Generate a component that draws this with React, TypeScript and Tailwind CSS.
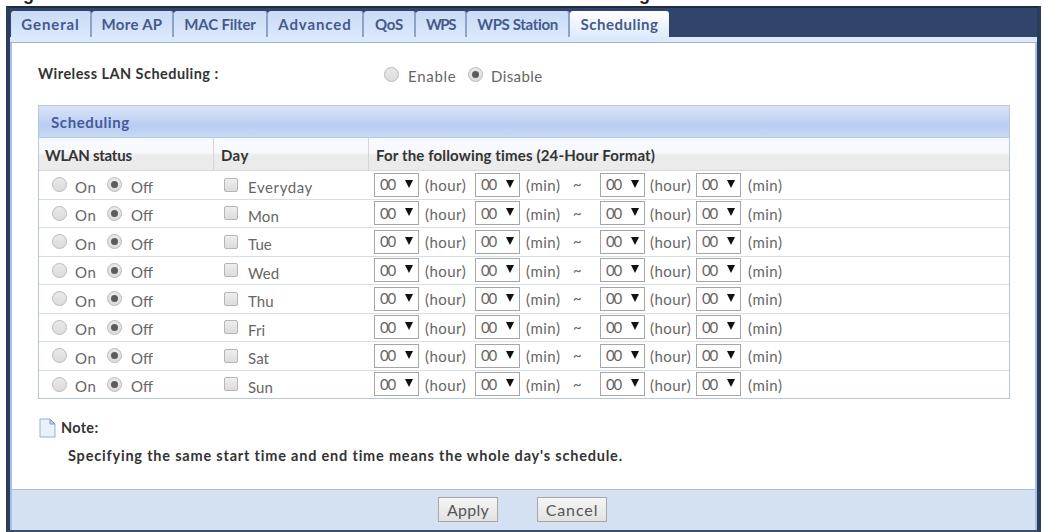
import { useState } from 'react'
import clsx from 'clsx'

type Tab = {
  label: string
  className: string
}

const TABS: Tab[] = [
  { label: 'General', className: 'w-[81px] tracking-[0.9px]' },
  { label: 'More AP', className: 'w-[82px] tracking-[0.3px]' },
  { label: 'MAC Filter', className: 'w-[94px] tracking-[-0.15px]' },
  { label: 'Advanced', className: 'w-[96px] tracking-[0.9px]' },
  { label: 'QoS', className: 'w-[52px] tracking-[-0.2px]' },
  { label: 'WPS', className: 'w-[51px] tracking-[-1.4px]' },
  { label: 'WPS Station', className: 'w-[103px] tracking-[-0.35px]' },
  { label: 'Scheduling', className: 'w-[99px] tracking-[0.5px]' }
]

const DAYS = ['Everyday', 'Mon', 'Tue', 'Wed', 'Thu', 'Fri', 'Sat', 'Sun']

type RadioProps = {
  checked: boolean
  onSelect: () => void
  label: string
}

function Radio({ checked, onSelect, label }: RadioProps) {
  return (
    <button
      type="button"
      role="radio"
      aria-checked={checked}
      aria-label={label}
      onClick={onSelect}
      className="flex size-[15px] shrink-0 items-center justify-center rounded-full border border-[#b9b9b9] bg-linear-to-b from-[#e9e9e9] to-[#dcdcdc]"
    >
      {checked && <span className="size-[7px] rounded-full bg-[#5c5c5c]" />}
    </button>
  )
}

function TimeSelect() {
  return (
    <button
      type="button"
      className="flex h-6 w-[45px] shrink-0 items-center border border-[#a6a6a6] bg-white pl-[5px] text-[#666]"
    >
      <span className="w-[25px] text-left text-[15px] leading-none tracking-[-1.2px]">00</span>
      <svg width="8" height="8" viewBox="0 0 8 8" className="mb-[2px]">
        <path d="M0 0h8L4 8z" fill="#111" />
      </svg>
    </button>
  )
}

function HourMin() {
  return (
    <>
      <TimeSelect />
      <span className="w-[56px] pt-[2px] pl-[6px] tracking-[0.45px]">(hour)</span>
      <TimeSelect />
      <span className="pt-[2px] pl-[6px] tracking-[0.5px]">(min)</span>
    </>
  )
}

function ScheduleRow({ day }: { day: string }) {
  const [on, setOn] = useState(false)
  const [checked, setChecked] = useState(false)

  return (
    <div className="flex flex-1 items-center border-b border-[#d9dde0] text-[15px] leading-none text-[#666] last:border-b-0">
      <div className="flex w-[175px] items-center pl-[13px]">
        <Radio checked={on} onSelect={() => setOn(true)} label={`${day} on`} />
        <span className="w-[40px] pt-[5px] pl-[8px] tracking-[0.6px]">On</span>
        <Radio checked={!on} onSelect={() => setOn(false)} label={`${day} off`} />
        <span className="pt-[5px] pl-[9px] tracking-[0px]">Off</span>
      </div>
      <div className="flex w-[160px] items-center pl-[10px]">
        <button
          type="button"
          role="checkbox"
          aria-checked={checked}
          aria-label={day}
          onClick={() => setChecked(!checked)}
          className="size-[14px] shrink-0 rounded-[2px] border border-[#b5b5b5] bg-linear-to-b from-[#eee] to-[#dcdcdc]"
        />
        <span className={clsx('pt-[6px] pl-[10px]', day === 'Everyday' ? 'tracking-[0.6px]' : 'tracking-[0.1px]')}>
          {day}
        </span>
      </div>
      <div className="flex items-center">
        <div className="flex w-[199px] items-center">
          <HourMin />
        </div>
        <span className="w-[27px]">~</span>
        <div className="flex items-center">
          <TimeSelect />
          <span className="w-[51px] pt-[2px] pl-[5px] tracking-[0.45px]">(hour)</span>
          <TimeSelect />
          <span className="pt-[2px] pl-[7px] tracking-[0.5px]">(min)</span>
        </div>
      </div>
    </div>
  )
}

function NoteIcon() {
  return (
    <svg width="17" height="20" viewBox="0 0 17 20">
      <path d="M1 1h10l5 5v13H1z" fill="#e9f2fc" stroke="#93b3d3" />
      <path d="M11 1v5h5z" fill="#b9d2ec" stroke="#7f9cc0" />
    </svg>
  )
}

export default function App() {
  const [enabled, setEnabled] = useState(false)
  const [activeTab, setActiveTab] = useState('Scheduling')

  return (
    <div className="flex h-[532px] w-[1043px] flex-col overflow-hidden bg-white font-['Lato',sans-serif]">
      {/* tail of the clipped caption line */}
      <div className="flex h-[6px] shrink-0 overflow-hidden pl-[23px] font-['Liberation_Sans',sans-serif] text-[18px] leading-[18px] font-bold text-[#222]">
        <span className="-mt-[15px] w-[616px]">g</span>
        <span className="-mt-[15px]">g</span>
      </div>

      <div className="ml-[6px] flex w-[1035px] flex-1 flex-col border-x-4 border-t-2 border-b-2 border-x-[#2b3d5c] border-t-[#1f2d42] border-b-[#3d4d68]">
        <div className="flex h-[29px] shrink-0 bg-[#31446b] pt-[3px] pl-[1px]">
          {TABS.map((tab) => {
            const active = tab.label === activeTab
            return (
              <button
                key={tab.label}
                type="button"
                onClick={() => setActiveTab(tab.label)}
                className={clsx(
                  'shrink-0 rounded-t-[3px] text-center text-[15px] leading-[22px] font-bold whitespace-nowrap text-[#465a8c]',
                  active
                    ? 'bg-linear-to-b from-white to-[#dfeafa]'
                    : 'border-r-2 border-r-[#8da2c8] bg-linear-to-b from-[#c9dbf5] to-[#d9e8fd]',
                  tab.className
                )}
              >
                {tab.label}
              </button>
            )
          })}
        </div>

        <div className="h-[6px] shrink-0 border-b border-[#a3b4cf] bg-[#dce9fb]" />

        <div className="flex flex-1 flex-col border-x-2 border-x-[#a9c0e6]">
          <div className="flex h-[62px] shrink-0 items-center pl-[26px] text-[15px] text-[#666]">
            <div className="w-[346px] text-[14.5px] font-bold tracking-[0.45px] text-[#333]">
              Wireless LAN Scheduling :
            </div>
            <Radio checked={enabled} onSelect={() => setEnabled(true)} label="Enable" />
            <span className="w-[69px] pt-[5px] pl-[9px] tracking-[0.7px]">Enable</span>
            <Radio checked={!enabled} onSelect={() => setEnabled(false)} label="Disable" />
            <span className="pt-[5px] pl-[8px] tracking-[0.4px]">Disable</span>
          </div>

          <div className="ml-[26px] flex h-[294px] w-[972px] shrink-0 flex-col border border-[#b9c7d4]">
            <div className="h-[32px] shrink-0 border-b border-[#b5cae6] bg-linear-to-b from-[#d9e4f7] from-0% via-[#b9cdf2] via-65% to-[#c7dbf5] pl-[12px] text-[15px] leading-[33px] font-bold tracking-[0.6px] text-[#465a9c]">
              Scheduling
            </div>
            <div className="flex h-[33px] shrink-0 border-b border-[#d5d9dc] bg-linear-to-b from-[#f8f9fc] from-45% to-[#ebebec] to-55% text-[15px] leading-[34px] font-bold text-[#333]">
              <div className="w-[175px] border-r border-[#d5d5d8] pl-[6px] tracking-[-0.25px]">WLAN status</div>
              <div className="w-[155px] border-r border-[#d5d5d8] pl-[7px] tracking-[0.4px]">Day</div>
              <div className="pl-[7px] tracking-[0.15px]">For the following times (24-Hour Format)</div>
            </div>
            <div className="flex flex-1 flex-col">
              {DAYS.map((day) => (
                <ScheduleRow key={day} day={day} />
              ))}
            </div>
          </div>

          <div className="flex flex-1 flex-col pl-[27px] text-[14.5px] font-bold text-[#333]">
            <div className="mt-[18px] flex h-[22px] items-center">
              <NoteIcon />
              <span className="pl-[5px] tracking-[0.3px]">Note:</span>
            </div>
            <div className="mt-[6px] pl-[29px] tracking-[0.8px]">
              Specifying the same start time and end time means the whole day's schedule.
            </div>
          </div>

          <div className="flex h-[41px] shrink-0 justify-center gap-[39px] border-t border-[#adbfd4] bg-[#d3e1f2] pt-[7px] pr-[2px] text-[16px] leading-[22px] text-[#555]">
            <button
              type="button"
              className="h-[25px] w-[60px] border border-[#a8a8a8] bg-linear-to-b from-[#f6f6f6] to-[#e2e2e2] tracking-[0.2px]"
            >
              Apply
            </button>
            <button
              type="button"
              className="h-[25px] w-[70px] border border-[#a8a8a8] bg-linear-to-b from-[#f6f6f6] to-[#e2e2e2] tracking-[0.9px]"
            >
              Cancel
            </button>
          </div>
        </div>
      </div>
    </div>
  )
}
